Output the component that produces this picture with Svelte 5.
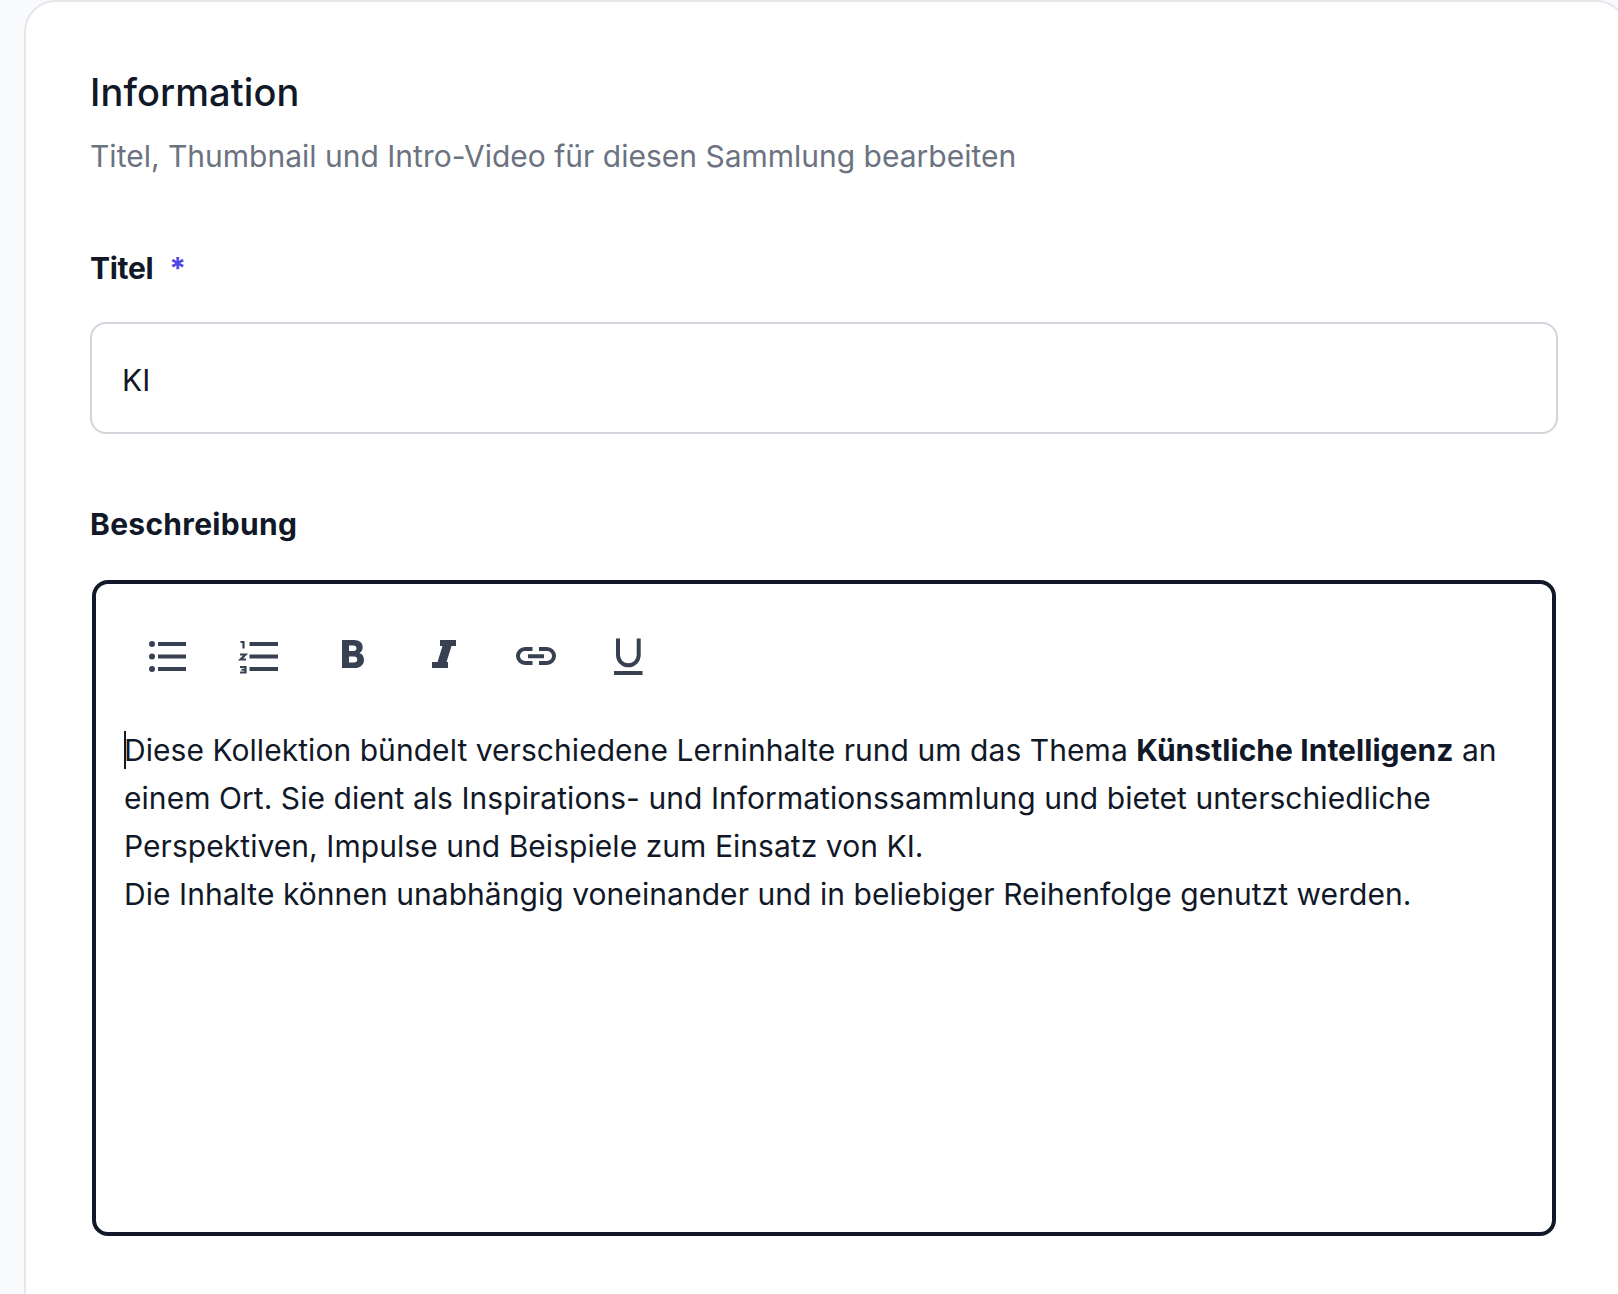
<script lang="ts">
  const title = 'KI';
</script>

<main class="page">
  <section class="card">
    <h2>Information</h2>
    <p class="sub">Titel, Thumbnail und Intro-Video für diesen Sammlung bearbeiten</p>

    <div class="label title-label">Titel <span class="req">*</span></div>
    <div class="input">{title}</div>

    <div class="label desc-label">Beschreibung</div>
    <div class="editor">
      <div class="toolbar">
        <button aria-label="Liste">
          <svg viewBox="0 0 48 48" width="48" height="48">
            <circle cx="9" cy="12" r="3" /><circle cx="9" cy="24.500" r="3" /><circle cx="9" cy="37" r="3" />
            <rect x="15" y="10" width="28" height="4" /><rect x="15" y="22.500" width="28" height="4" /><rect x="15" y="35" width="28" height="4" />
          </svg>
        </button>
        <button aria-label="Nummerierte Liste">
          <svg viewBox="0 0 48 48" width="48" height="48">
            <rect x="14.500" y="10" width="28.500" height="4" /><rect x="14.500" y="22.500" width="28.500" height="4" /><rect x="14.500" y="35" width="28.500" height="4" />
            <path class="thin" d="M5.500 10h3v6.500M5 22.500h5.500L5.500 27.500h5.500M5 35h5.500v5.500H5M6.500 37.750h4" />
          </svg>
        </button>
        <button aria-label="Fett">
          <svg viewBox="0 0 48 48" width="48" height="48">
            <path fill-rule="evenodd" d="M15 8h12c5.300 0 8.700 2.900 8.700 7.300 0 2.600-1.200 4.600-3.300 5.700 2.900 1 4.600 3.500 4.600 6.700 0 5-3.700 8.300-9.400 8.300H15zM22 13.500v5.500h4.500c1.900 0 3-1 3-2.700s-1.100-2.800-3-2.800zM22 24.500v6h5c2 0 3.300-1.100 3.300-3s-1.300-3-3.300-3z" />
          </svg>
        </button>
        <button aria-label="Kursiv">
          <svg viewBox="0 0 48 48" width="48" height="48">
            <path d="M21 8H37V14H32.500L27.500 30H29V36H13V30H18.500L23.500 14H21Z" />
          </svg>
        </button>
        <button aria-label="Link">
          <svg viewBox="0 0 48 48" width="48" height="48">
            <path class="line" d="M21.500 17H14a7 7 0 0 0 0 14H21.500M28 17h8a7 7 0 0 1 0 14h-8M17 24.250h16" />
          </svg>
        </button>
        <button aria-label="Unterstrichen">
          <svg viewBox="0 0 48 48" width="48" height="48">
            <path class="line" d="M15 6.500v16.500a10.350 10.350 0 0 0 20.700 0V6.500" />
            <rect x="11" y="39" width="28.500" height="4" />
          </svg>
        </button>
      </div>
      <div class="content">
        <span class="caret"></span>
        <p>Diese Kollektion bündelt verschiedene Lerninhalte rund um das Thema <strong>Künstliche Intelligenz</strong> an einem Ort. Sie dient als Inspirations- und Informationssammlung und bietet unterschiedliche Perspektiven, Impulse und Beispiele zum Einsatz von KI.</p>
        <p>Die Inhalte können unabhängig voneinander und in beliebiger Reihenfolge genutzt werden.</p>
      </div>
    </div>
  </section>
</main>

<style>
  :global(body) {
    margin: 0;
    background: #f9fafb;
    overflow: hidden;
  }

  .page {
    height: 1294px;
    padding-left: 24px;
    font-family: Inter, "Noto Sans", sans-serif;
    color: #111827;
    overflow: hidden;
  }

  .card {
    box-sizing: border-box;
    width: 1604px;
    min-height: 1400px;
    background: #fff;
    border: 2px solid #e5e7eb;
    border-radius: 32px;
    padding: 62px 68px 0 64px;
  }

  h2 {
    margin: 0;
    font-size: 38px;
    line-height: 56px;
    font-weight: 500;
    letter-spacing: 0.1px;
  }

  .sub {
    margin: 12px 0 0;
    font-size: 30px;
    line-height: 48px;
    color: #6b7280;
  }

  .label {
    font-size: 30px;
    line-height: 40px;
    font-weight: 700;
    letter-spacing: 0.3px;
  }

  .title-label {
    margin-top: 68px;
    letter-spacing: -0.3px;
  }

  .req {
    color: #4f46e5;
    margin-left: 9px;
  }

  .input {
    box-sizing: border-box;
    height: 112px;
    margin-top: 34px;
    border: 2px solid #d1d5db;
    border-radius: 16px;
    padding: 0 30px;
    font-size: 30px;
    line-height: 112px;
  }

  .desc-label {
    margin-top: 70px;
  }

  .editor {
    box-sizing: border-box;
    height: 656px;
    margin: 36px 2px 0;
    border: 4px solid #111827;
    border-radius: 16px;
    padding: 48px 28px 0;
  }

  .toolbar {
    display: flex;
    gap: 44px;
    padding-left: 19px;
  }

  button {
    all: unset;
    display: block;
    width: 48px;
    height: 48px;
  }

  svg {
    display: block;
    fill: #374151;
  }

  .thin {
    fill: none;
    stroke: #374151;
    stroke-width: 2.200;
  }

  .line {
    fill: none;
    stroke: #374151;
    stroke-width: 4;
  }

  .content {
    position: relative;
    margin-top: 46px;
    font-size: 30px;
    line-height: 48px;
    letter-spacing: 0.05px;
  }

  .content p {
    margin: 0;
  }

  .content strong {
    font-weight: 700;
  }

  .caret {
    position: absolute;
    left: 0;
    top: 5px;
    width: 2px;
    height: 38px;
    background: #111827;
  }
</style>
